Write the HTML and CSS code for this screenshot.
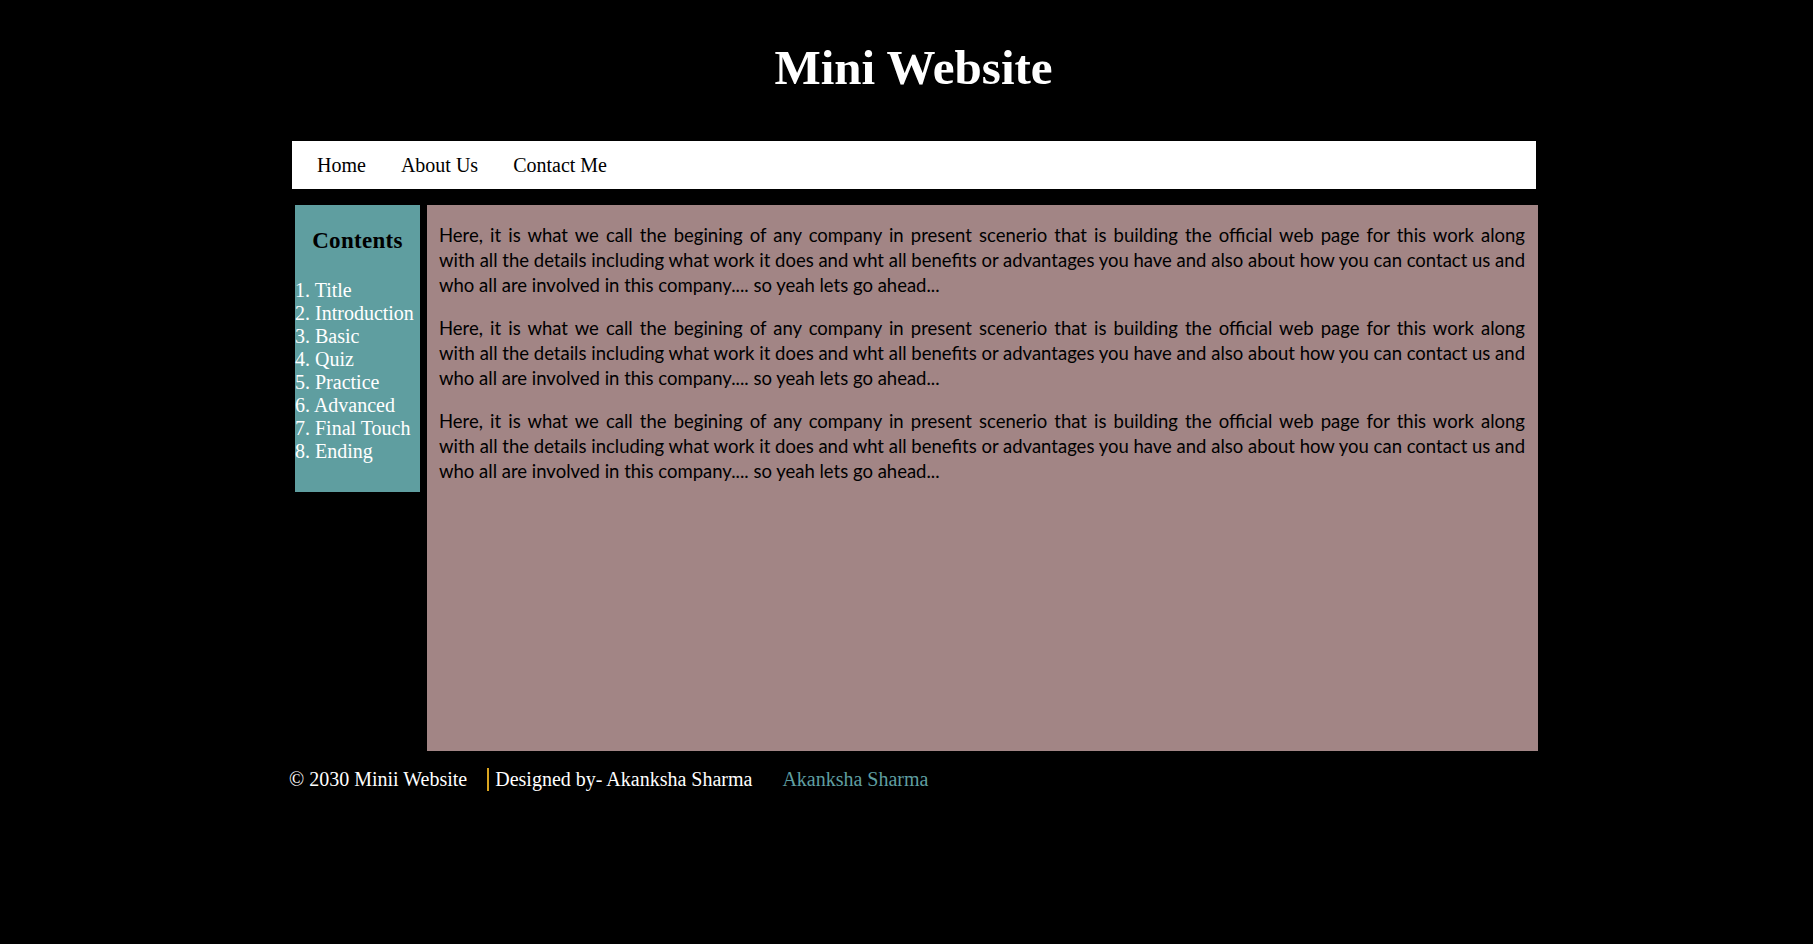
FILE: index.html
```html
<!DOCTYPE html>
<html lang="en">
<head>
<meta charset="utf-8">
<title>Mini Website</title>
<link rel="stylesheet" href="styles.css">
</head>
<body>
<div class="wrapper">
  <header class="site-header">
    <h1 class="site-title">Mini Website</h1>
  </header>
  <nav class="nav">
    <a class="nav-link" href="#">Home</a>
    <a class="nav-link" href="#">About Us</a>
    <a class="nav-link" href="#">Contact Me</a>
  </nav>
  <div class="content-row">
    <aside class="sidebar">
      <h3 class="sidebar-title">Contents</h3>
      <ul class="toc">
        <li>1. Title</li>
        <li>2. Introduction</li>
        <li>3. Basic</li>
        <li>4. Quiz</li>
        <li>5. Practice</li>
        <li>6. Advanced</li>
        <li>7. Final Touch</li>
        <li>8. Ending</li>
      </ul>
    </aside>
    <main class="main">
      <p class="para"><span class="line">Here, it is what we call the begining of any company in present scenerio that is building the official web page for this work along</span> <span class="line">with all the details including what work it does and wht all benefits or advantages you have and also about how you can contact us and</span> who all are involved in this company.... so yeah lets go ahead...</p>
      <p class="para"><span class="line">Here, it is what we call the begining of any company in present scenerio that is building the official web page for this work along</span> <span class="line">with all the details including what work it does and wht all benefits or advantages you have and also about how you can contact us and</span> who all are involved in this company.... so yeah lets go ahead...</p>
      <p class="para"><span class="line">Here, it is what we call the begining of any company in present scenerio that is building the official web page for this work along</span> <span class="line">with all the details including what work it does and wht all benefits or advantages you have and also about how you can contact us and</span> who all are involved in this company.... so yeah lets go ahead...</p>
    </main>
  </div>
  <footer class="footer">
    <span class="copy">&copy; 2030 Minii Website</span>
    <span class="designed">Designed by- Akanksha Sharma</span>
    <a class="footer-link" href="#">Akanksha Sharma</a>
  </footer>
</div>
</body>
</html>
```
FILE: styles.css
```css
html, body {
  margin: 0;
  padding: 0;
  background: #000;
}

body {
  font-family: "Liberation Serif", "Times New Roman", serif;
  color: #fff;
}

.wrapper {
  width: 1249px;
  margin-left: 289px;
}

.site-header {
  padding-top: 40px;
}

.site-title {
  margin: 0;
  font-size: 49px;
  font-weight: bold;
  line-height: 56px;
  text-align: center;
  color: #fff;
}

.nav {
  display: flex;
  align-items: center;
  gap: 35px;
  width: 1244px;
  height: 48px;
  margin: 45px 0 0 3px;
  padding-left: 25px;
  box-sizing: border-box;
  background: #fff;
}

.nav-link {
  font-size: 20px;
  line-height: 23px;
  color: #000;
  text-decoration: none;
}

.content-row {
  display: flex;
  align-items: flex-start;
  gap: 7px;
  margin: 16px 0 0 6px;
}

.sidebar {
  width: 125px;
  height: 287px;
  flex: none;
  background: #5f9ea0;
  box-sizing: border-box;
}

.sidebar-title {
  margin: 23px 0 25px;
  font-size: 23px;
  line-height: 26px;
  font-weight: bold;
  text-align: center;
  letter-spacing: 0.3px;
  color: #000;
}

.toc {
  list-style: none;
  margin: 0;
  padding: 0;
}

.toc li {
  font-size: 20px;
  line-height: 23px;
  color: #fff;
}

.main {
  flex: 1;
  min-height: 546px;
  padding: 0 13px 0 12px;
  background: #a28585;
  box-sizing: border-box;
}

.para {
  margin: 18px 0;
  font-family: "Comic Sans MS", "Lato", sans-serif;
  font-size: 18.5px;
  line-height: 25px;
  text-align: justify;
  color: #000;
}

.line {
  display: block;
  word-spacing: -2px;
  text-align-last: justify;
}

.footer {
  display: flex;
  align-items: center;
  margin-top: 17px;
  font-size: 20px;
  line-height: 23px;
}

.copy {
  padding-right: 20px;
}

.designed {
  border-left: 2px solid #daa520;
  padding-left: 6px;
}

.footer-link {
  margin-left: 30px;
  color: #5f9ea0;
  text-decoration: none;
}
```
